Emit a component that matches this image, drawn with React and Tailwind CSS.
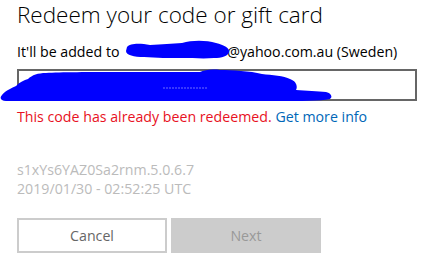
import React from 'react';

const Scribble = () => (
  <svg className="absolute left-0 top-0 pointer-events-none" width="441" height="268" viewBox="0 0 441 268">
    {/* email blot */}
    <path
      d="M127 47 C130 43 140 43 150 45 C162 44 172 44 182 43 C192 40 206 40 216 43 C224 45 230 48 229 52 C228 56 222 58 214 58 C204 59 192 58 182 58 C170 58 156 58 144 57 C134 57 126 55 126 51 Z"
      fill="#0000ff"
    />
    {/* code field blot */}
    <path
      d="M2 95 C6 90 12 88 16 86 C20 82 24 80 28 79 C32 75 38 73 46 73 C60 72 90 72 120 72 C150 72 180 72 200 72 C204 70 212 69 220 70 C232 70 250 71 262 74 C272 75 284 76 290 79 C296 81 298 86 296 90 C306 91 318 91 326 92 C331 93 333 97 330 99 C320 101 300 101 280 101 C220 101 150 101 90 101 C50 101 20 101 6 101 C1 101 -1 98 2 95 Z"
      fill="#0000ff"
    />
    <line x1="163" y1="88" x2="208" y2="88" stroke="#6f6fff" strokeWidth="1" strokeDasharray="2 1" />
  </svg>
);

export default function App() {
  return (
    <div className="relative w-[441px] h-[268px] bg-white pl-[17px] font-['Open_Sans',sans-serif] overflow-hidden">
      <h1 className="text-[22.5px] leading-[30px] font-light text-black">Redeem your code or gift card</h1>

      <p className="mt-[11.5px] text-[14.2px] leading-[20px] text-black">
        It'll be added to <span className="inline-block w-[104px]"></span>@yahoo.com.au (Sweden)
      </p>

      <div className="mt-[7.5px] w-[400px] h-[32px] border-2 border-[#666666] bg-white"></div>

      <p className="mt-[5.5px] text-[14.2px] leading-[20px]">
        <span className="text-[#e81123]">This code has already been redeemed.</span>{' '}
        <a className="text-[#0067b8]">Get more info</a>
      </p>

      <div className="mt-[33.5px] text-[14.2px] leading-[19px] text-[#bbbbbb]">
        <div>s1xYs6YAZ0Sa2rnm.5.0.6.7</div>
        <div>2019/01/30 - 02:52:25 UTC</div>
      </div>

      <div className="mt-[20px] flex gap-[4px]">
        <button className="w-[150px] h-[35px] border-2 border-[#cccccc] bg-white text-[14.2px] text-[#666666]">Cancel</button>
        <button className="w-[150px] h-[35px] bg-[#cccccc] text-[14.2px] text-[#999999]">Next</button>
      </div>

      <Scribble />
    </div>
  );
}
